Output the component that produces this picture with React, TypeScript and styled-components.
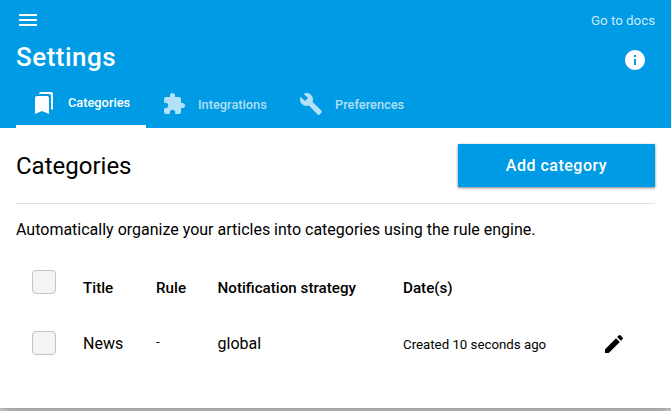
import React from "react";
import styled, { createGlobalStyle } from "styled-components";
import { MdMenu, MdInfo, MdBookmarks, MdExtension, MdBuild, MdEdit } from "react-icons/md";

const GlobalStyle = createGlobalStyle`
  * { box-sizing: border-box; }
  body {
    margin: 0;
    font-family: Roboto, sans-serif;
    font-size: 16px;
    color: #000;
    background: #fff;
    overflow: hidden;
  }
`;

const Page = styled.div`
  height: 411px;
  display: flex;
  flex-direction: column;
  background: #a9abac;
`;

const Header = styled.header`
  height: 128px;
  flex: none;
  background: #009be5;
  color: #fff;
  display: flex;
  flex-direction: column;
`;

const TopBar = styled.div`
  height: 40px;
  padding: 0 16px;
  display: flex;
  align-items: center;
  justify-content: space-between;
`;

const DocsLink = styled.a`
  font-size: 13.3px;
  line-height: 20px;
  color: rgba(255, 255, 255, 0.8);
  padding-top: 1px;
`;

const TitleBar = styled.div`
  height: 40px;
  padding: 0 24px 0 16px;
  display: flex;
  align-items: center;
  justify-content: space-between;
`;

const PageTitle = styled.h1`
  margin: 0;
  padding-bottom: 6px;
  font-size: 26px;
  line-height: 32px;
  font-weight: 500;
  letter-spacing: 0.5px;
`;

const Tabs = styled.nav`
  flex: 1;
  display: flex;
  padding: 0 16px;
`;

const Tab = styled.div<{ $active?: boolean; $width: number }>`
  width: ${(p) => p.$width}px;
  padding: 0 0 0 16px;
  display: flex;
  align-items: center;
  gap: 12px;
  font-size: 12.8px;
  font-weight: 500;
  white-space: nowrap;
  color: ${(p) => (p.$active ? "#fff" : "rgba(255, 255, 255, 0.7)")};
  border-bottom: ${(p) => (p.$active ? "3px solid #fff" : "0")};
  svg { flex: none; }
`;

const Content = styled.main`
  height: 280px;
  flex: none;
  padding: 16px 16px 0;
  background: #fff;
`;

const SectionHead = styled.div`
  height: 60px;
  display: flex;
  justify-content: space-between;
  border-bottom: 1px solid #e0e0e0;
`;

const SectionTitle = styled.h2`
  margin: 0;
  font-size: 24px;
  line-height: 44px;
  font-weight: 400;
`;

const AddButton = styled.button`
  width: 197px;
  height: 43px;
  border: 0;
  padding: 0;
  background: #009be5;
  color: #fff;
  font: 500 16px Roboto, sans-serif;
  letter-spacing: 0.5px;
  box-shadow: 0 1px 3px rgba(0, 0, 0, 0.3), 0 1px 2px rgba(0, 0, 0, 0.24);
`;

const Description = styled.p`
  margin: 16px 0 0;
  line-height: 20px;
`;

const Row = styled.div<{ $height: number }>`
  height: ${(p) => p.$height}px;
  padding: 0 16px 0 16px;
  display: grid;
  grid-template-columns: 51px 73px 61.5px 185.5px 199px 24px;
  align-items: center;
`;

const HeadCell = styled.div`
  font-size: 15.2px;
  line-height: 20px;
  font-weight: 500;
  padding-top: 12px;
  white-space: nowrap;
`;

const Cell = styled.div<{ $small?: boolean }>`
  font-size: ${(p) => (p.$small ? "13.28px" : "16px")};
  line-height: 20px;
  padding-top: ${(p) => (p.$small ? "4px" : "2px")};
  white-space: nowrap;
`;

const RuleCell = styled(Cell)`
  font-size: 13.33px;
  padding: 0 0 2px;
`;

const EditButton = styled.div`
  display: flex;
  padding-top: 2px;
`;

const Checkbox = styled.div`
  width: 24px;
  height: 24px;
  border: 1px solid #c4c4c4;
  border-radius: 4px;
  background: #f4f4f4;
`;

const BottomEdge = styled.div`
  height: 3px;
  background:
    linear-gradient(90deg, rgba(255, 255, 255, 0.25), transparent 10px, transparent calc(100% - 10px), rgba(255, 255, 255, 0.25)),
    linear-gradient(#9da0a1, #b0b2b3);
`;

export default function App() {
  return (
    <Page>
      <GlobalStyle />
      <Header>
        <TopBar>
          <MdMenu size={24} />
          <DocsLink>Go to docs</DocsLink>
        </TopBar>
        <TitleBar>
          <PageTitle>Settings</PageTitle>
          <MdInfo size={24} />
        </TitleBar>
        <Tabs>
          <Tab $active $width={130}><MdBookmarks size={24} />Categories</Tab>
          <Tab $width={137}><MdExtension size={24} />Integrations</Tab>
          <Tab $width={137}><MdBuild size={24} />Preferences</Tab>
        </Tabs>
      </Header>
      <Content>
        <SectionHead>
          <SectionTitle>Categories</SectionTitle>
          <AddButton>Add category</AddButton>
        </SectionHead>
        <Description>Automatically organize your articles into categories using the rule engine.</Description>
        <Row $height={84}>
          <Checkbox />
          <HeadCell>Title</HeadCell>
          <HeadCell>Rule</HeadCell>
          <HeadCell>Notification strategy</HeadCell>
          <HeadCell>Date(s)</HeadCell>
        </Row>
        <Row $height={38}>
          <Checkbox />
          <Cell>News</Cell>
          <RuleCell>-</RuleCell>
          <Cell>global</Cell>
          <Cell $small>Created 10 seconds ago</Cell>
          <EditButton><MdEdit size={24} /></EditButton>
        </Row>
      </Content>
      <BottomEdge />
    </Page>
  );
}
